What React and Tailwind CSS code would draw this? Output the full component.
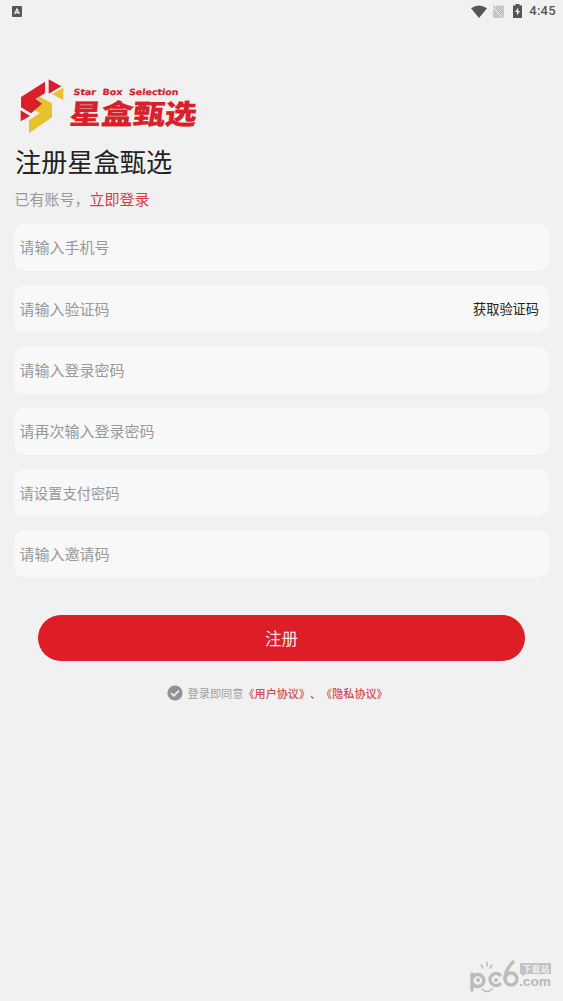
import { memo } from 'react';

const FIELDS = [
  { id: 'phone', label: '请输入手机号' },
  { id: 'code', label: '请输入验证码', action: '获取验证码' },
  { id: 'password', label: '请输入登录密码' },
  { id: 'confirm', label: '请再次输入登录密码' },
  { id: 'pay', label: '请设置支付密码', small: true },
  { id: 'invite', label: '请输入邀请码' },
];

const StatusBar = memo(function StatusBar() {
  return (
    <div className="flex h-6 items-center justify-between pl-3 pr-[7px] text-[#555]">
      <svg className="-mt-px h-[11px] w-[10px]" viewBox="0 0 10 11">
        <rect width="10" height="11" rx="1" fill="#555" />
        <path d="M2.5 8 5 3l2.5 5M3.5 6.5h3" fill="none" stroke="#eee" strokeWidth="1.3" />
      </svg>
      <div className="-mt-[2px] flex items-center">
        {/* Wifi */}
        <svg className="mr-[6px] h-[13px] w-4" viewBox="0 0 16 13">
          <path d="M0 3.2Q8-2.2 16 3.2L8 13Z" fill="#555" />
        </svg>
        {/* No sim */}
        <svg className="mr-[9px] h-[13px] w-[11px]" viewBox="0 0 11 13">
          <path d="M4 .5h7V13H0V4.5Z" fill="#c6c6c6" />
          <path d="M0 1 11 13" stroke="#f1f1f1" strokeWidth="2.2" />
          <path d="M0 .5 11 12.5" stroke="#999" strokeWidth="1" />
        </svg>
        {/* Battery */}
        <svg className="mr-[7px] h-[14px] w-[9px]" viewBox="0 0 9 14">
          <path d="M2.5 0h4v1.5H9V14H0V1.5h2.5Z" fill="#555" />
          <path d="M5.3 3.5 2 8h2v3.5L7 7H5.2Z" fill="#eee" />
        </svg>
        <span className="font-['Roboto',sans-serif] text-[13px] font-medium leading-6 tracking-[0.3px]">
          4:45
        </span>
      </div>
    </div>
  );
});

function Logo() {
  return (
    <div className="ml-[6px] flex h-[55px] items-start">
      <svg className="h-[55px] w-[44px] shrink-0" viewBox="31 28 132 165">
        <path d="M88 80 127 101V143L58 191V152L90 131L70 118Z" fill="#e8c22c" />
        <path d="M106 36V70L78 88L97 102L64 131L34 113V82Z" fill="#d91f29" />
        <path d="M117 29 155 50 117 72Z" fill="#d91f29" />
        <path d="M161 54V91L127 73Z" fill="#e8c22c" />
        <path d="M33 122V155L61 139Z" fill="#d91f29" />
      </svg>
      <svg className="ml-[4px] h-[55px] w-[132px] shrink-0" viewBox="0 0 132 55">
        <g fill="#d91f29" stroke="#d91f29">
          <text
            x="7"
            y="16"
            textLength="105"
            lengthAdjust="spacingAndGlyphs"
            transform="skewX(-6)"
            strokeWidth="0.2"
            className="font-['DejaVu_Sans',sans-serif] text-[8.5px] font-bold [word-spacing:3px]"
          >
            Star Box Selection
          </text>
          <text
            x="5.5"
            y="45"
            textLength="127"
            lengthAdjust="spacingAndGlyphs"
            transform="skewX(-6)"
            strokeWidth="0.2"
            className="font-['Noto_Sans_CJK_SC',sans-serif] text-[27.5px] font-black"
          >
            星盒甄选
          </text>
        </g>
      </svg>
    </div>
  );
}

function Field({ label, action, small }) {
  return (
    <div className="flex h-[47px] items-center justify-between rounded-[10px] bg-[#f8f8f8] pl-[5.5px] pr-[10px]">
      <span className={small ? 'text-[14.3px] text-[#999]' : 'text-[15px] text-[#999]'}>
        {label}
      </span>
      {action && <button className="text-[13.2px] text-[#222]">{action}</button>}
    </div>
  );
}

function Watermark() {
  return (
    <svg className="absolute bottom-[5px] right-[10px] h-[37px] w-[84px]" viewBox="0 0 84 37">
      <g fill="none" stroke="#bcbcbe" strokeWidth="3.4" strokeLinecap="round">
        <path d="M3 15V31M3 20a6 6 0 1 1 0 3" />
        <path d="M31 16a6 6 0 1 0 0 9" />
        <path d="M44 3Q36 11 36 20" />
        <circle cx="42" cy="20" r="6" />
      </g>
      <g fill="none" stroke="#bcbcbe" strokeWidth="1.5" strokeLinecap="round">
        <path d="M12 6l2 3M18 3v4M23 6l-2 3M13 30q5 5 10 0" />
      </g>
      <circle cx="9" cy="21" r="2" fill="#bcbcbe" />
      <circle cx="27" cy="21" r="2" fill="#bcbcbe" />
      <path d="M51 4H82V15H56L53 18V15H51Z" fill="#c2c2c4" />
      <text
        x="54"
        y="12.5"
        textLength="26"
        fill="#f1f1f1"
        className="font-['Noto_Sans_CJK_SC',sans-serif] text-[8px] font-bold"
      >
        下载站
      </text>
      <text
        x="50"
        y="26.5"
        textLength="32"
        lengthAdjust="spacingAndGlyphs"
        fill="#b8b8ba"
        className="font-['Liberation_Sans',sans-serif] text-[12px] font-bold"
      >
        .com
      </text>
    </svg>
  );
}

export default function App() {
  return (
    <div className="relative h-[1001px] w-full overflow-hidden bg-[#f1f1f1] font-['Noto_Sans_CJK_SC',sans-serif] [text-spacing-trim:space-all]">
      <StatusBar />

      <main className="px-[14px] pt-[55px]">
        <Logo />
        <h1 className="ml-px mt-[9px] text-[26.2px] leading-9 text-[#222]">注册星盒甄选</h1>
        <p className="ml-[0.5px] mt-[9px] text-[15px] leading-[22px] text-[#999]">
          已有账号，<a className="text-[#dc3b42]">立即登录</a>
        </p>

        <div className="mt-[14px] flex flex-col gap-[14.3px]">
          {FIELDS.map((field) => (
            <Field key={field.id} label={field.label} action={field.action} small={field.small} />
          ))}
        </div>

        <button className="mx-6 mt-[38px] flex h-[46px] w-[487px] items-center justify-center rounded-full bg-[#dd1e27] text-[16.5px] text-[#fbe3e4]">
          注册
        </button>

        {/* Agreement */}
        <div className="mt-[21.5px] flex h-5 items-center pl-[153px] text-[11.2px] text-[#a0a0a0]">
          <svg className="mr-[4.5px] h-4 w-4 shrink-0" viewBox="0 0 16 16">
            <circle cx="8" cy="8" r="7.6" fill="#929292" />
            <path d="m4.2 8.2 2.7 2.6 5-5.2" fill="none" stroke="#f1f1f1" strokeWidth="1.7" />
          </svg>
          <span className="whitespace-nowrap">
            登录即同意
            <a className="text-[11.1px] font-medium text-[#dc4a50]">《用户协议》、《隐私协议》</a>
          </span>
        </div>
      </main>

      <Watermark />
    </div>
  );
}
